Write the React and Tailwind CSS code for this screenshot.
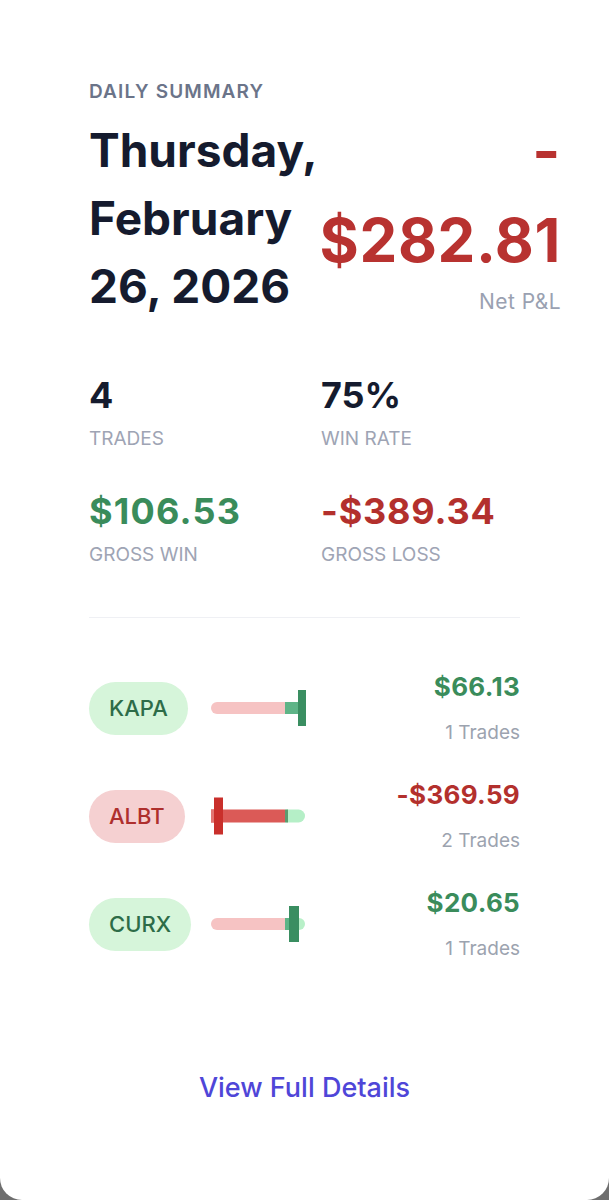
const rows = [
  {
    sym: "KAPA",
    pill: "bg-[#d6f5da] text-[#2d6c48]",
    value: "$66.13",
    valueCls: "text-[#3a8c5b]",
    trades: "1 Trades",
    bar: "kapa",
  },
  {
    sym: "ALBT",
    pill: "bg-[#f5d0d1] text-[#ae2f2d]",
    value: "-$369.59",
    valueCls: "text-[#b3302d]",
    trades: "2 Trades",
    bar: "albt",
  },
  {
    sym: "CURX",
    pill: "bg-[#d6f5da] text-[#2d6c48]",
    value: "$20.65",
    valueCls: "text-[#3a8c5b]",
    trades: "1 Trades",
    bar: "curx",
  },
];

function Bar({ kind }) {
  if (kind === "kapa") {
    return (
      <svg width="96" height="38" viewBox="0 0 96 38">
        <rect x="0" y="13" width="80" height="12" rx="6" fill="#f6c3c3" />
        <rect x="74" y="13" width="14" height="12" fill="#5eb487" />
        <rect x="87" y="1" width="8" height="36" fill="#3a8e61" />
      </svg>
    );
  }
  if (kind === "albt") {
    return (
      <svg width="96" height="38" viewBox="0 0 96 38">
        <rect x="70" y="12.5" width="24" height="13" rx="6.5" fill="#b5efc7" />
        <rect x="0" y="12.5" width="74" height="13" fill="#db5a57" />
        <rect x="0" y="12.5" width="3" height="13" fill="#e27572" />
        <rect x="74" y="12.5" width="3" height="13" fill="#5c9b6f" />
        <rect x="3" y="0.5" width="9" height="37" fill="#c92f2b" />
      </svg>
    );
  }
  return (
    <svg width="96" height="38" viewBox="0 0 96 38">
      <rect x="80" y="13" width="14" height="12" rx="6" fill="#b8f0c8" />
      <rect x="0" y="13" width="80" height="12" rx="6" fill="#f6c3c3" />
      <rect x="74" y="13" width="5" height="12" fill="#5eb487" />
      <rect x="78" y="1" width="10" height="36" fill="#3a8e61" />
    </svg>
  );
}

export default function App() {
  return (
    <div className="min-h-[1200px] bg-[#6e6e6e] font-['Inter','Noto_Sans',sans-serif]">
      <div className="h-[1200px] bg-white rounded-b-[22px] px-[89px] pt-[80px]">
        <div className="text-[19px] leading-[24px] font-semibold tracking-[0.06em] text-[#6b7489]">
          DAILY SUMMARY
        </div>
        <div className="flex justify-between items-start w-[472px] mt-px">
          <div className="mt-[11px] text-[46px] leading-[68px] font-bold text-[#151b2e] w-[240px]">
            Thursday,
            <br />
            February
            <br />
            26, 2026
          </div>
          <div className="text-right">
            <div className="text-[60px] leading-[90px] font-bold text-[#b83230] tracking-[0.01em]">
              -
              <br />
              $282.81
            </div>
            <div className="mt-[3px] text-[21px] leading-[28px] tracking-[0.02em] text-[#9aa1b1]">Net P&amp;L</div>
          </div>
        </div>

        <div className="mt-[53px] grid grid-cols-[232px_1fr] gap-y-[36px]">
          <div>
            <div className="text-[36px] leading-[44px] font-bold text-[#151b2e]">4</div>
            <div className="mt-[8px] text-[19px] leading-[28px] text-[#9ea4b4]">TRADES</div>
          </div>
          <div>
            <div className="text-[36px] leading-[44px] font-bold text-[#151b2e]">75%</div>
            <div className="mt-[8px] text-[19px] leading-[28px] text-[#9ea4b4]">WIN RATE</div>
          </div>
          <div>
            <div className="text-[36px] leading-[44px] font-bold tracking-[1.2px] text-[#3a8c5b]">$106.53</div>
            <div className="mt-[8px] text-[19px] leading-[28px] text-[#9ea4b4]">GROSS WIN</div>
          </div>
          <div>
            <div className="text-[36px] leading-[44px] font-bold tracking-[0.8px] text-[#b3302d]">-$389.34</div>
            <div className="mt-[8px] text-[19px] leading-[28px] text-[#9ea4b4]">GROSS LOSS</div>
          </div>
        </div>

        <div className="mt-[48px] h-px bg-[#eff0f4]" />

        <div className="mt-[51px] flex flex-col gap-[30px]">
          {rows.map((r) => (
            <div key={r.sym} className="flex items-center h-[78px]">
              <div className="w-[122px] flex items-center">
                <div
                  className={
                    "h-[53px] px-[20px] rounded-full flex items-center text-[22px] font-medium " + r.pill
                  }
                >
                  {r.sym}
                </div>
              </div>
              <Bar kind={r.bar} />
              <div className="ml-auto text-right">
                <div className={"text-[26px] leading-[36px] font-bold tracking-[0.3px] " + r.valueCls}>{r.value}</div>
                <div className="mt-[14px] text-[19px] leading-[28px] text-[#9ca3af]">{r.trades}</div>
              </div>
            </div>
          ))}
        </div>

        <div className="mt-[107px] text-center text-[27px] leading-[36px] font-medium text-[#4f46d8]">
          View Full Details
        </div>
      </div>
    </div>
  );
}
